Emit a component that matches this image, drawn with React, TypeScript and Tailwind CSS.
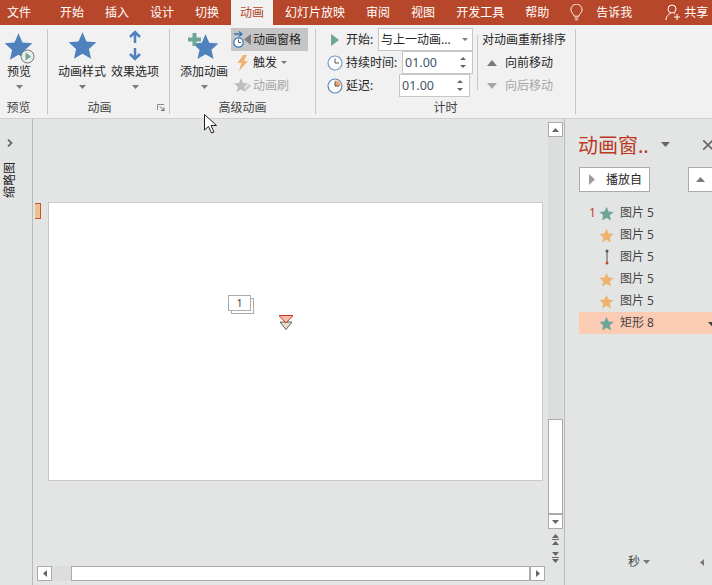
import React from "react";

const STAR = "12,1 15.3,8.6 23.5,9.4 17.3,14.9 19.1,23 12,18.8 4.9,23 6.7,14.9 .5,9.4 8.7,8.6";

function Star({ size, color }: { size: number; color: string }) {
  return (
    <svg width={size} height={size} viewBox="0 0 24 24" className="shrink-0">
      <polygon points={STAR} fill={color} />
    </svg>
  );
}

function Tri({ dir = "down", w = 7, h = 4, color = "#7a7a7a" }: { dir?: string; w?: number; h?: number; color?: string }) {
  const pts: Record<string, string> = {
    down: "0,0 10,0 5,10",
    up: "0,10 10,10 5,0",
    left: "10,0 10,10 0,5",
    right: "0,0 10,5 0,10",
  };
  return (
    <svg width={w} height={h} viewBox="0 0 10 10" preserveAspectRatio="none" className="shrink-0">
      <polygon points={pts[dir]} fill={color} />
    </svg>
  );
}

function Clock({ delay }: { delay?: boolean }) {
  return (
    <svg width="16" height="16" viewBox="0 0 16 16" className="shrink-0">
      <circle cx="8" cy="8" r="7" fill="#fff" stroke={delay ? "#5b87b8" : "#6f9bc8"} strokeWidth="1.2" />
      {delay && <path d="M8 8V2.2A5.8 5.8 0 0 1 13.8 8Z" fill="#e9a56c" />}
      <path d="M8 3.5V8H12" fill="none" stroke="#555" strokeWidth="1" />
    </svg>
  );
}

function BigButton({ label, children }: { label: string; children: React.ReactNode }) {
  return (
    <div className="flex w-[48px] flex-col items-center">
      <div className="flex h-[35px] w-full items-end justify-center">{children}</div>
      <div className="h-[16px] whitespace-nowrap text-[12px] leading-[16px]">{label}</div>
      <div className="mt-[5px]">
        <Tri />
      </div>
    </div>
  );
}

function Group({ label, className, children, launcher, labelClass }: { label: string; className: string; children: React.ReactNode; launcher?: boolean; labelClass?: string }) {
  return (
    <div className={`relative flex shrink-0 flex-col border-r border-[#c6c6c6] ${className}`}>
      <div className="flex h-[72px]">{children}</div>
      <div className={`h-[13px] text-center text-[12px] leading-[14px] text-[#444] ${labelClass ?? ""}`}>{label}</div>
      {launcher && (
        <svg width="8" height="7" viewBox="0 0 8 7" className="absolute bottom-[3px] right-[4px]">
          <path d="M.5 6V.5H7" fill="none" stroke="#8a8a8a" />
          <path d="M3 2.5 7 6.5M7 3.5v3H4" fill="none" stroke="#666" />
        </svg>
      )}
    </div>
  );
}

function SmallAction({ label, active, disabled, caret, children }: { label: string; active?: boolean; disabled?: boolean; caret?: boolean; children: React.ReactNode }) {
  return (
    <div className={`flex h-[23px] w-[77px] items-center ${active ? "bg-[#c5c5c5]" : ""}`}>
      <div className="flex w-[22px] shrink-0 justify-center">{children}</div>
      <span className={`whitespace-nowrap text-[12px] leading-[16px] ${disabled ? "text-[#a6a6a6]" : ""}`}>{label}</span>
      {caret && (
        <span className="ml-[4px]">
          <Tri w={6} h={3} />
        </span>
      )}
    </div>
  );
}

function Spin({ className }: { className: string }) {
  return (
    <div className={`flex h-[23px] items-center justify-between border border-[#c6c6c6] bg-white pl-[2px] pr-[6px] text-[12.5px] text-[#44546a] ${className}`}>
      <span>01.00</span>
      <div className="flex flex-col gap-[5px]">
        <Tri dir="up" w={6} h={3} color="#666" />
        <Tri w={6} h={3} color="#666" />
      </div>
    </div>
  );
}

function ScrollBtn({ dir }: { dir: string }) {
  const vertical = dir === "up" || dir === "down";
  return (
    <div className="flex h-[15px] w-[15px] shrink-0 items-center justify-center border border-[#ababab] bg-white">
      {vertical ? <Tri dir={dir} w={7} h={4} color="#666" /> : <Tri dir={dir} w={4} h={7} color="#666" />}
    </div>
  );
}

const TABS = ["开始", "插入", "设计", "切换", "动画", "幻灯片放映", "审阅", "视图", "开发工具", "帮助"];

const ITEMS = [
  { no: "1", kind: "green", text: "图片 5" },
  { kind: "orange", text: "图片 5" },
  { kind: "line", text: "图片 5" },
  { kind: "orange", text: "图片 5" },
  { kind: "orange", text: "图片 5" },
  { kind: "green", text: "矩形 8", selected: true },
];

export default function App() {
  return (
    <div className="relative flex h-[585px] w-[712px] flex-col overflow-hidden bg-[#e3e5e5] font-['Noto_Sans','Noto_Sans_CJK_SC',sans-serif] text-[#262626]">
      {/* title tabs */}
      <div className="flex h-[25px] shrink-0 items-stretch whitespace-nowrap bg-[#b7472a] text-[12px] text-white">
        <div className="flex w-[51px] shrink-0 items-center pl-[7px]">文件</div>
        <div className="flex shrink-0 gap-[3px]">
          {TABS.map((t) => (
            <div key={t} className={`flex shrink-0 items-center px-[9px] ${t === "动画" ? "bg-[#f1f1f1] text-[#b7472a]" : ""}`}>
              {t}
            </div>
          ))}
        </div>
        <div className="ml-[12px] flex shrink-0 items-center">
          <svg width="13" height="17" viewBox="0 0 14 18" fill="none" stroke="#fff" strokeWidth="1">
            <path d="M4.500 13C4.300 10.500 1 9.500 1 6a6 6 0 0 1 12 0c0 3.500-3.300 4.500-3.500 7ZM5 15h4M5.700 17h2.600" />
          </svg>
        </div>
        <div className="ml-[13px] flex shrink-0 items-center">告诉我</div>
        <div className="ml-[33px] flex shrink-0 items-center gap-[3px]">
          <svg width="16" height="17" viewBox="0 0 16 17" fill="none" stroke="#fff" strokeWidth="1">
            <circle cx="7" cy="5" r="4" />
            <path d="M1 16c0-3.500 2-5.500 4.500-6.500M9 9.500 10 10M12 10v6M9 13h6" />
          </svg>
          共享
        </div>
      </div>

      {/* ribbon */}
      <div className="flex h-[94px] shrink-0 border-b border-[#cfcfcf] bg-[#f1f1f1] pb-[4px] pt-[4px]">
        <Group label="预览" className="w-[48px]" labelClass="pr-[10px]">
          <div className="relative -ml-[5px]">
            <BigButton label="预览">
              <div className="relative mb-[3px] mr-[2px] h-[29px] w-[29px]">
                <Star size={29} color="#4f81bd" />
                <svg width="15" height="15" viewBox="0 0 15 15" className="absolute -bottom-[3px] -right-[2px]">
                  <circle cx="7.500" cy="7.500" r="6.500" fill="#e9ece9" stroke="#777" />
                  <polygon points="5.500,3.500 11,7.500 5.500,11.500" fill="#6fa598" />
                </svg>
              </div>
            </BigButton>
          </div>
        </Group>

        <Group label="动画" className="w-[122px]" labelClass="pr-[18px]" launcher>
          <div className="flex gap-[5px] pl-[10px]">
            <BigButton label="动画样式">
              <div className="mb-[4px]">
                <Star size={29} color="#4f81bd" />
              </div>
            </BigButton>
            <BigButton label="效果选项">
              <svg width="14" height="31" viewBox="0 0 14 31" fill="none" stroke="#4f81bd" strokeWidth="2.500" className="mb-[3px]">
                <path d="M7 2V13M2 7 7 2 12 7M7 18V29M2 24 7 29 12 24" />
              </svg>
            </BigButton>
          </div>
        </Group>

        <Group label="高级动画" className="w-[146px]">
          <div className="flex gap-[3px] pl-[10px]">
            <BigButton label="添加动画">
              <div className="relative mb-[4px] h-[30px] w-[40px]">
                <div className="absolute right-[5px] top-[3px]">
                  <Star size={27} color="#4f81bd" />
                </div>
                <svg width="13" height="13" viewBox="0 0 13 13" className="absolute left-[4px] top-[3px]">
                  <path d="M4.500 0h4v4.500H13v4H8.500V13h-4V8.500H0v-4h4.500Z" fill="#6fa598" />
                </svg>
              </div>
            </BigButton>
            <div className="-mt-px flex flex-col">
              <SmallAction label="动画窗格" active>
                <svg width="19" height="19" viewBox="0 0 19 19" fill="none">
                  <path d="M1 4h7M6 1.500 9 4 6 6.500" stroke="#2e75b6" strokeWidth="1.300" />
                  <circle cx="5.500" cy="12.500" r="4.700" fill="#fff" stroke="#2e75b6" strokeWidth="1.200" />
                  <path d="M5.500 9.500v3H8" stroke="#555" />
                  <polygon points="18,4 18,15 11,9.500" fill="#7f7f7f" />
                </svg>
              </SmallAction>
              <SmallAction label="触发" caret>
                <svg width="11" height="16" viewBox="0 0 11 16">
                  <polygon points="6,0 10,0 7,6 11,6 2,16 4.500,8 .5,8" fill="#efb26f" />
                </svg>
              </SmallAction>
              <SmallAction label="动画刷" disabled>
                <svg width="17" height="15" viewBox="0 0 17 15">
                  <polygon points="7,0 9,5 14,5.500 10,9 11,14 7,11.500 2.500,14 4,9 0,5.500 5,5" fill="#bdbdbd" />
                  <path d="M10 13 16 7" stroke="#c9c9c9" strokeWidth="2.500" />
                </svg>
              </SmallAction>
            </div>
          </div>
        </Group>

        <Group label="计时" className="w-[260px]">
          <div className="-mt-px flex w-[161px] flex-col text-[12px] leading-[16px]">
            <div className="flex h-[23px] items-center pl-[11px]">
              <div className="flex w-[19px] justify-center pl-[2px] pr-[5px]">
                <Tri dir="right" w={8} h={12} color="#6fa598" />
              </div>
              <span className="w-[32px]">开始:</span>
              <div className="flex h-[23px] w-[95px] items-center justify-between border border-[#c6c6c6] bg-white pl-[2px] pr-[4px]">
                <span className="whitespace-nowrap">与上一动画...</span>
                <Tri w={6} h={3} />
              </div>
            </div>
            <div className="flex h-[23px] items-center pl-[11px]">
              <div className="w-[19px]">
                <Clock />
              </div>
              <span className="w-[56px]">持续时间:</span>
              <Spin className="w-[71px]" />
            </div>
            <div className="flex h-[23px] items-center pl-[11px]">
              <div className="w-[19px]">
                <Clock delay />
              </div>
              <span className="w-[53px]">延迟:</span>
              <Spin className="w-[71px]" />
            </div>
          </div>
          <div className="mt-[6px] h-[55px] w-px bg-[#c6c6c6]" />
          <div className="flex flex-col pl-[4px] text-[12px] leading-[16px]">
            <div className="flex h-[22px] items-center whitespace-nowrap">对动画重新排序</div>
            <div className="flex h-[23px] items-center pl-[5px]">
              <Tri dir="up" w={10} h={6} />
              <span className="ml-[8px]">向前移动</span>
            </div>
            <div className="flex h-[23px] items-center pl-[5px] text-[#a6a6a6]">
              <Tri w={10} h={6} color="#a6a6a6" />
              <span className="ml-[8px]">向后移动</span>
            </div>
          </div>
        </Group>
      </div>

      {/* work area */}
      <div className="flex min-h-0 flex-1">
        {/* thumbnails */}
        <div className="flex w-[33px] shrink-0 flex-col items-start border-r border-[#b9b9b9] pl-[7px] pt-[20px]">
          <svg width="6" height="8" viewBox="0 0 6 8" fill="none" stroke="#666" strokeWidth="1.800">
            <path d="M1 .7 4.500 4 1 7.300" />
          </svg>
          <div className="-ml-[4px] mt-[15px] rotate-180 text-[12px] leading-[14px] [text-orientation:sideways] [writing-mode:vertical-rl]">缩略图</div>
        </div>

        {/* canvas */}
        <div className="flex w-[515px] shrink-0 flex-col">
          <div className="flex-1 pl-[15px] pt-[83px]">
            <div className="relative h-[279px] w-[495px] border border-[#c9c9c9] bg-white">
              <div className="absolute -left-[14px] top-0 h-[16px] w-[6px] border border-l-0 border-[#c8552a] bg-[#f0c090]" />
              <div className="absolute left-[182px] top-[95px] h-[16px] w-[23px] border border-[#ababab] bg-white" />
              <div className="absolute left-[179px] top-[92px] flex h-[16px] w-[23px] items-center justify-center border border-[#ababab] bg-white text-[10px] leading-none text-[#333]">1</div>
              <svg width="14" height="15" viewBox="0 0 14 15" className="absolute left-[230px] top-[112px]">
                <polygon points="1,7 13,7 7,14.500" fill="#e9dccb" stroke="#4f6a60" strokeWidth="1" />
                <polygon points="0,.5 14,.5 7,8" fill="#f6c0ac" stroke="#c8301e" strokeWidth="1" />
              </svg>
            </div>
          </div>
          <div className="mb-[4px] flex h-[15px] shrink-0 pl-[4px]">
            <ScrollBtn dir="left" />
            <div className="h-full w-[19px] bg-[#dcdedd]" />
            <div className="h-full w-[459px] border border-[#ababab] bg-white" />
            <ScrollBtn dir="right" />
          </div>
        </div>

        {/* vertical scroll */}
        <div className="flex w-[16px] shrink-0 flex-col pt-[3px]">
          <ScrollBtn dir="up" />
          <div className="flex w-[15px] flex-1 flex-col justify-end bg-[#dcdedd]">
            <div className="h-[95px] border border-[#ababab] bg-white" />
          </div>
          <ScrollBtn dir="down" />
          <div className="flex h-[56px] w-[15px] shrink-0 flex-col items-center pt-[5px]">
            <div className="flex flex-col items-center gap-[1px]">
              <Tri dir="up" w={7} h={4} color="#666" />
              <div className="h-px w-[7px] bg-[#666]" />
              <Tri dir="up" w={7} h={4} color="#666" />
            </div>
            <div className="mt-[7px] flex flex-col items-center gap-[1px]">
              <Tri w={7} h={4} color="#666" />
              <div className="h-px w-[7px] bg-[#666]" />
              <Tri w={7} h={4} color="#666" />
            </div>
          </div>
        </div>

        {/* animation pane */}
        <div className="flex min-w-0 flex-1 flex-col overflow-hidden border-l border-[#b9b9b9] pl-[14px]">
          <div className="mt-[14px] flex h-[26px] items-center whitespace-nowrap">
            <span className="-ml-px text-[20px] leading-[26px] text-[#bb3a1e]">动画窗..</span>
            <span className="ml-[12px] -mt-[4px]">
              <Tri w={9} h={5} color="#666" />
            </span>
            <svg width="10" height="10" viewBox="0 0 10 10" className="ml-[33px] -mt-[3px] shrink-0">
              <path d="M0 0 10 10M10 0 0 10" stroke="#666" strokeWidth="1.600" />
            </svg>
          </div>
          <div className="mt-[8px] flex h-[25px] shrink-0 gap-[38px]">
            <div className="flex w-[71px] shrink-0 items-center border border-[#ababab] bg-white pl-[9px] text-[12px]">
              <Tri dir="right" w={6} h={11} color="#9a9f9d" />
              <span className="ml-[11px]">播放自</span>
            </div>
            <div className="flex w-[40px] shrink-0 items-center border border-[#ababab] bg-white pl-[7px]">
              <Tri dir="up" w={9} h={5} color="#7a7a7a" />
            </div>
          </div>
          <div className="mt-[10px] flex flex-col">
            {ITEMS.map((it, i) => (
              <div key={i} className={`relative flex h-[22px] w-[133px] items-center text-[12px] text-[#444] ${it.selected ? "bg-[#fccbb3]" : ""}`}>
                <span className="w-[20px] pl-[10px] text-[#b7472a]">{it.no}</span>
                <span className="flex w-[15px] justify-center">
                  {it.kind === "line" ? (
                    <svg width="4" height="16" viewBox="0 0 4 16">
                      <path d="M2 2V14" stroke="#555" />
                      <circle cx="2" cy="2" r="1.500" fill="#555" />
                      <circle cx="2" cy="14" r="1.500" fill="#c0492b" />
                    </svg>
                  ) : (
                    <Star size={15} color={it.kind === "green" ? "#6fa598" : "#efb26f"} />
                  )}
                </span>
                <span className="ml-[6px]">{it.text}</span>
                {it.selected && (
                  <span className="absolute right-[-3px] top-[10px]">
                    <Tri w={7} h={4} color="#444" />
                  </span>
                )}
              </div>
            ))}
          </div>
          <div className="mb-[15px] mt-auto flex h-[16px] items-center pl-[49px] text-[12px] text-[#444]">
            <span>秒</span>
            <span className="ml-[3px]">
              <Tri w={7} h={4} />
            </span>
            <span className="ml-[50px]">
              <Tri dir="left" w={4} h={7} color="#7a7a7a" />
            </span>
          </div>
        </div>
      </div>

      {/* mouse pointer */}
      <svg width="15" height="20" viewBox="0 0 15 20" className="absolute left-[204px] top-[114px]">
        <path d="M.5.5V16L4.500 12.500 7.500 19 10 18 7 11.500H12.500Z" fill="#fff" stroke="#222" strokeWidth="1" />
      </svg>
    </div>
  );
}
